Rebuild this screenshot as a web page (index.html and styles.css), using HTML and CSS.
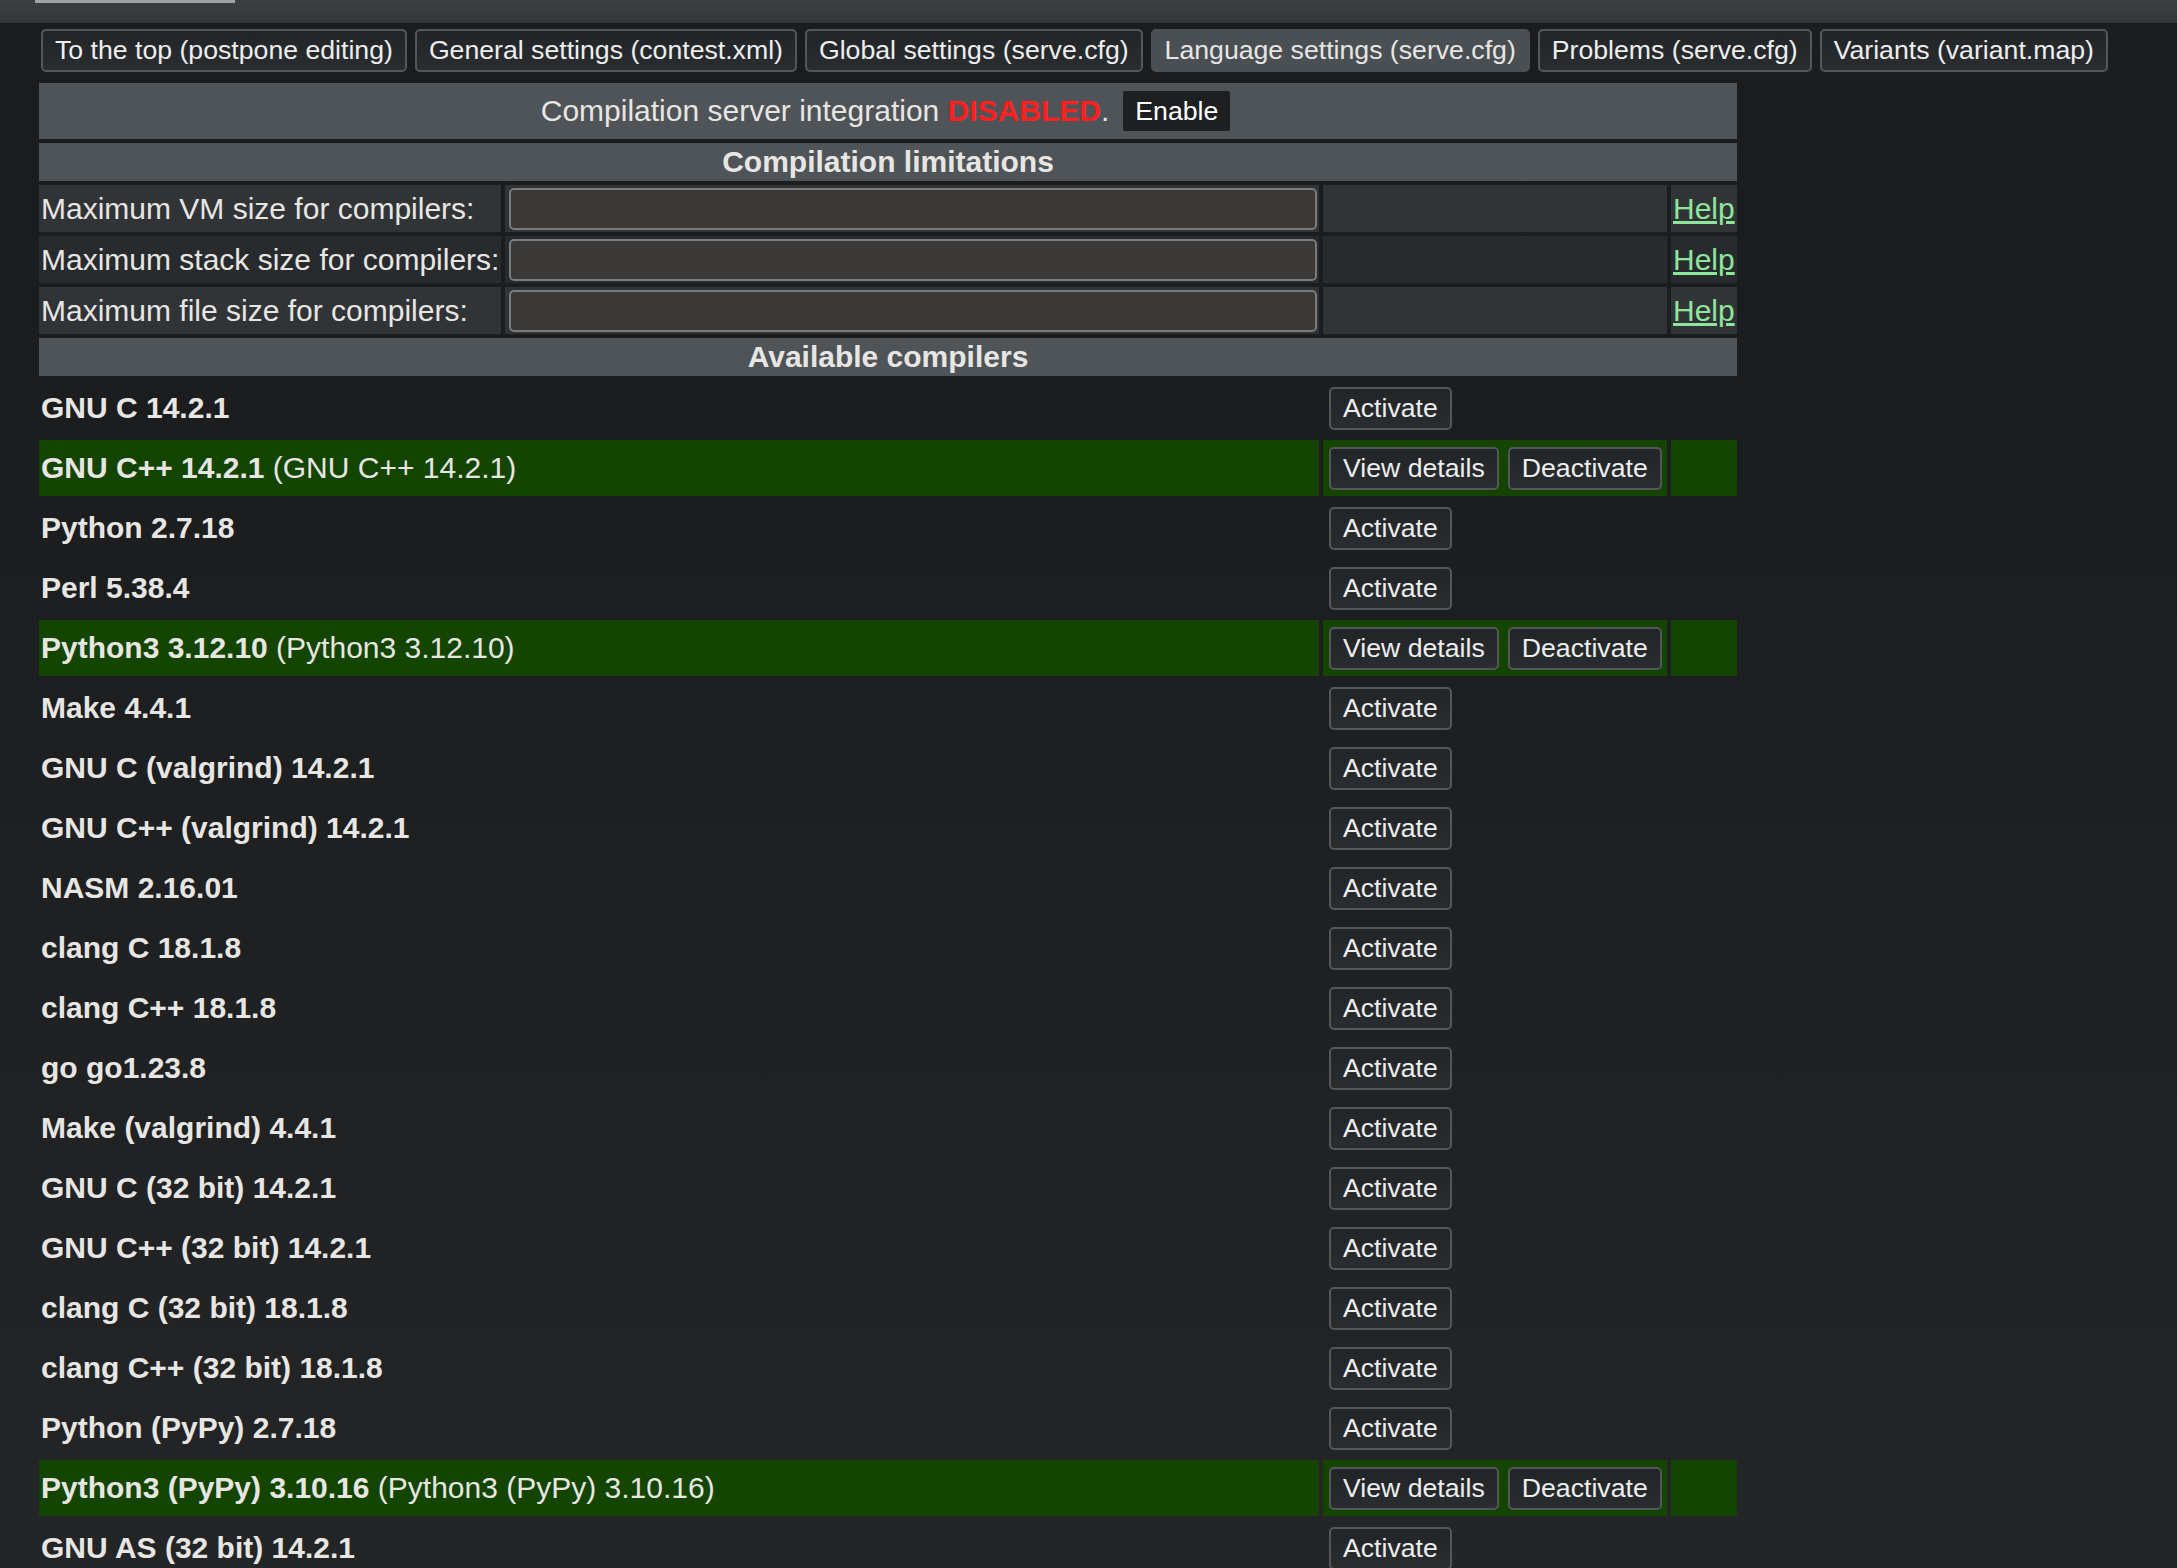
FILE: index.html
```html
<!DOCTYPE html>
<html lang="en">
<head>
<meta charset="utf-8">
<title>Language settings</title>
<link rel="stylesheet" href="styles.css">
</head>
<body>
<div class="topbar"><div class="tab"></div></div>
<nav class="nav">
  <button class="btn">To the top (postpone editing)</button>
  <button class="btn">General settings (contest.xml)</button>
  <button class="btn">Global settings (serve.cfg)</button>
  <button class="btn active">Language settings (serve.cfg)</button>
  <button class="btn">Problems (serve.cfg)</button>
  <button class="btn">Variants (variant.map)</button>
</nav>
<table class="main">
  <colgroup>
    <col class="c-label"><col class="c-input"><col class="c-act"><col class="c-help">
  </colgroup>
  <tr>
    <td colspan="4" class="hdr plain">
      <div class="srv"><span>Compilation server integration <b class="off">DISABLED</b>.</span><button class="enable">Enable</button></div>
    </td>
  </tr>
  <tr><th colspan="4" class="hdr">Compilation limitations</th></tr>
  <tr class="lim odd"><td>Maximum VM size for compilers:</td><td><input class="field" type="text"></td><td></td><td><a href="#" class="help">Help</a></td></tr>
  <tr class="lim even"><td>Maximum stack size for compilers:</td><td><input class="field" type="text"></td><td></td><td><a href="#" class="help">Help</a></td></tr>
  <tr class="lim odd"><td>Maximum file size for compilers:</td><td><input class="field" type="text"></td><td></td><td><a href="#" class="help">Help</a></td></tr>
  <tr><th colspan="4" class="hdr">Available compilers</th></tr>
  <tr class="comp"><td colspan="2"><b>GNU C 14.2.1</b></td><td><div class="acts"><button class="btn">Activate</button></div></td><td></td></tr>
  <tr class="comp on"><td colspan="2"><b>GNU C++ 14.2.1</b> (GNU C++ 14.2.1)</td><td><div class="acts"><button class="btn">View details</button><button class="btn">Deactivate</button></div></td><td></td></tr>
  <tr class="comp"><td colspan="2"><b>Python 2.7.18</b></td><td><div class="acts"><button class="btn">Activate</button></div></td><td></td></tr>
  <tr class="comp"><td colspan="2"><b>Perl 5.38.4</b></td><td><div class="acts"><button class="btn">Activate</button></div></td><td></td></tr>
  <tr class="comp on"><td colspan="2"><b>Python3 3.12.10</b> (Python3 3.12.10)</td><td><div class="acts"><button class="btn">View details</button><button class="btn">Deactivate</button></div></td><td></td></tr>
  <tr class="comp"><td colspan="2"><b>Make 4.4.1</b></td><td><div class="acts"><button class="btn">Activate</button></div></td><td></td></tr>
  <tr class="comp"><td colspan="2"><b>GNU C (valgrind) 14.2.1</b></td><td><div class="acts"><button class="btn">Activate</button></div></td><td></td></tr>
  <tr class="comp"><td colspan="2"><b>GNU C++ (valgrind) 14.2.1</b></td><td><div class="acts"><button class="btn">Activate</button></div></td><td></td></tr>
  <tr class="comp"><td colspan="2"><b>NASM 2.16.01</b></td><td><div class="acts"><button class="btn">Activate</button></div></td><td></td></tr>
  <tr class="comp"><td colspan="2"><b>clang C 18.1.8</b></td><td><div class="acts"><button class="btn">Activate</button></div></td><td></td></tr>
  <tr class="comp"><td colspan="2"><b>clang C++ 18.1.8</b></td><td><div class="acts"><button class="btn">Activate</button></div></td><td></td></tr>
  <tr class="comp"><td colspan="2"><b>go go1.23.8</b></td><td><div class="acts"><button class="btn">Activate</button></div></td><td></td></tr>
  <tr class="comp"><td colspan="2"><b>Make (valgrind) 4.4.1</b></td><td><div class="acts"><button class="btn">Activate</button></div></td><td></td></tr>
  <tr class="comp"><td colspan="2"><b>GNU C (32 bit) 14.2.1</b></td><td><div class="acts"><button class="btn">Activate</button></div></td><td></td></tr>
  <tr class="comp"><td colspan="2"><b>GNU C++ (32 bit) 14.2.1</b></td><td><div class="acts"><button class="btn">Activate</button></div></td><td></td></tr>
  <tr class="comp"><td colspan="2"><b>clang C (32 bit) 18.1.8</b></td><td><div class="acts"><button class="btn">Activate</button></div></td><td></td></tr>
  <tr class="comp"><td colspan="2"><b>clang C++ (32 bit) 18.1.8</b></td><td><div class="acts"><button class="btn">Activate</button></div></td><td></td></tr>
  <tr class="comp"><td colspan="2"><b>Python (PyPy) 2.7.18</b></td><td><div class="acts"><button class="btn">Activate</button></div></td><td></td></tr>
  <tr class="comp on"><td colspan="2"><b>Python3 (PyPy) 3.10.16</b> (Python3 (PyPy) 3.10.16)</td><td><div class="acts"><button class="btn">View details</button><button class="btn">Deactivate</button></div></td><td></td></tr>
  <tr class="comp"><td colspan="2"><b>GNU AS (32 bit) 14.2.1</b></td><td><div class="acts"><button class="btn">Activate</button></div></td><td></td></tr>
</table>
</body>
</html>
```

FILE: styles.css
```css
html {
  background: #232527;
}

body {
  margin: 0;
  min-height: 1568px;
  background: linear-gradient(180deg, #1b1c1e 0px, #1c1d1f 500px, #232527 1568px);
  color: #e8e6e3;
  font-family: "Liberation Sans", Arial, sans-serif;
  font-size: 30px;
}

.topbar {
  height: 23px;
  background: linear-gradient(180deg, #3b3f42, #33373a);
}

.tab {
  margin-left: 35px;
  width: 200px;
  height: 3px;
  background: #a2a2a2;
}

.nav {
  display: flex;
  gap: 8px;
  padding: 6px 0 0 41px;
}

.btn {
  font-family: inherit;
  font-size: 26.67px;
  line-height: 31px;
  margin: 0;
  padding: 4px 12px;
  border: 2px solid #53575b;
  border-radius: 5px;
  background: linear-gradient(180deg, #222527, #2a2d30);
  color: #eeeeee;
  white-space: nowrap;
}

.nav .active {
  background: #4a4f53;
  border-color: #4a4f53;
  color: #e8e6e3;
}

.main {
  table-layout: fixed;
  width: 1706px;
  border-spacing: 4px;
  margin: 7px 0 0 35px;
}

.c-label { width: 462px; }
.c-input { width: 814px; }
.c-act { width: 344px; }
.c-help { width: 66px; }

.main td,
.main th {
  padding: 2px;
}

.hdr {
  background: #4f5458;
  text-align: center;
  font-weight: bold;
}

.hdr.plain {
  font-weight: normal;
}

.srv {
  display: flex;
  justify-content: center;
  align-items: center;
  height: 52px;
  white-space: nowrap;
}

.off {
  color: #ff1f1f;
}

.enable {
  font-family: inherit;
  font-size: 26.67px;
  line-height: 31px;
  margin: 0 5px 0 14px;
  padding: 4.5px 12px;
  border: 0;
  border-radius: 2px;
  background: #1d1f21;
  color: #ffffff;
}

.main .lim td {
  padding: 2.5px 2px;
  background: #313437;
  white-space: nowrap;
}

.main .lim.even td {
  background: #282b2e;
}

.field {
  display: block;
  box-sizing: border-box;
  width: 808px;
  height: 42px;
  margin: 0 0 0 2px;
  background: #3a3938;
  border: 2px solid #7b7b7b;
  border-radius: 5px;
}

.help {
  color: #8fe59b;
  text-decoration: underline;
}

.comp td {
  white-space: nowrap;
}

.comp.on td {
  background: #134400;
}

.acts {
  display: flex;
  gap: 9px;
  padding: 4.5px 4px;
}
```
